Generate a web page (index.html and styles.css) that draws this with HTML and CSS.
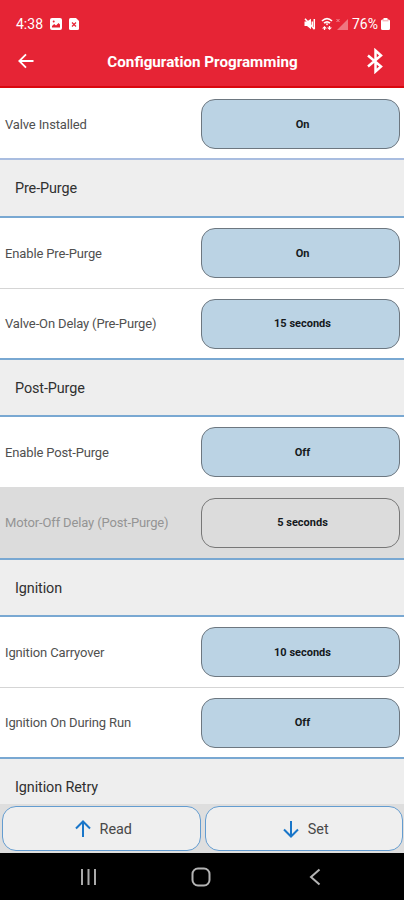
FILE: index.html
```
<!DOCTYPE html>
<html lang="en">
<head>
<meta charset="utf-8">
<title>Configuration Programming</title>
<link rel="stylesheet" href="styles.css">
</head>
<body>
<div class="screen">
  <header class="header">
    <div class="status">
      <span class="clock">4:38</span>
      <svg class="ic-photo" width="12" height="12" viewBox="0 0 12 12"><rect width="12" height="12" rx="2" fill="#fff"/><path d="M2 9.500V8l2.200-2 1.800 1.500L8.500 5 10 6.500V9.500Z" fill="#e62435"/><circle cx="3.700" cy="3.500" r="1" fill="#e62435"/></svg>
      <svg class="ic-sim" width="10" height="12" viewBox="0 0 10 12"><path d="M1.500 0H7L10 3V10.500Q10 12 8.500 12H1.500Q0 12 0 10.500V1.500Q0 0 1.500 0Z" fill="#fff"/><path d="M3 4.500 7 8.500M7 4.500 3 8.500" stroke="#e62435" stroke-width="1.200"/></svg>
      <span class="spacer"></span>
      <svg class="ic-mute" width="12" height="12" viewBox="0 0 12 12"><path d="M.5 3.500H3L7 .8V11.200L3 8H.5Z" fill="#fff"/><path d="M1 .8 10.500 11.200" stroke="#fff" stroke-width="1.600"/><path d="M8.300 3.500V8M10.300 1V11" stroke="#fff" stroke-width="1.500"/></svg>
      <svg class="ic-wifi" width="12" height="14" viewBox="0 0 12 14"><path d="M1 4Q6-.8 11 4M3 6.200Q6 3.500 9 6.200" fill="none" stroke="#fff" stroke-width="1.700"/><path d="M4.500 6.500 6 8.500 7.500 6.500ZM1 11.500 3.500 9 6 11.500ZM6 10.500H11L8.500 13Z" fill="#fff"/><path d="M3.500 11V13M8.500 9V11" stroke="#fff" stroke-width="1.300"/></svg>
      <svg class="ic-signal" width="12" height="12" viewBox="0 0 12 12"><path d="M12 1V12H1Z" fill="#fff" opacity=".38"/><path d="M.5 1 3.500 4M3.500 1 .5 4" stroke="#fff" opacity=".5"/></svg>
      <span class="percent">76%</span>
      <svg class="ic-battery" width="9" height="12" viewBox="0 0 9 12"><path d="M2.500 0H6.500V1.500H7.500Q9 1.500 9 3V10.500Q9 12 7.500 12H1.500Q0 12 0 10.500V3Q0 1.500 1.500 1.500H2.500Z" fill="#fff"/><path d="M1.500 2.800H7.500" stroke="#f29aa2"/></svg>
    </div>
    <div class="toolbar">
      <svg class="back" width="16" height="16" viewBox="0 0 16 16"><path d="M15.500 8H1.500M8 1.300 1.300 8 8 14.700" fill="none" stroke="#fff" stroke-width="1.800"/></svg>
      <h1 class="title">Configuration Programming</h1>
      <svg class="bluetooth" width="18" height="26" viewBox="0 0 18 26"><path d="M2 7.500 15 18.500 9.500 23.500V2.500L15 7.500 2 18.500" fill="none" stroke="#fff" stroke-width="2.500"/></svg>
    </div>
  </header>
  <main class="settings">
    <div class="row first"><span class="label">Valve Installed</span><button class="value">On</button></div>
    <h2 class="section tall">Pre-Purge</h2>
    <div class="row"><span class="label">Enable Pre-Purge</span><button class="value">On</button></div>
    <div class="row divided"><span class="label">Valve-On Delay (Pre-Purge)</span><button class="value">15 seconds</button></div>
    <h2 class="section">Post-Purge</h2>
    <div class="row"><span class="label">Enable Post-Purge</span><button class="value">Off</button></div>
    <div class="row disabled"><span class="label">Motor-Off Delay (Post-Purge)</span><button class="value">5 seconds</button></div>
    <h2 class="section">Ignition</h2>
    <div class="row"><span class="label">Ignition Carryover</span><button class="value">10 seconds</button></div>
    <div class="row divided"><span class="label">Ignition On During Run</span><button class="value">Off</button></div>
    <h2 class="section last">Ignition Retry</h2>
  </main>
  <div class="actions">
    <button class="action"><svg width="16" height="18" viewBox="0 0 16 18"><path d="M8 17V2M1 8.500 8 1.500 15 8.500" fill="none" stroke="#1976c9" stroke-width="2"/></svg><span>Read</span></button>
    <button class="action"><svg width="16" height="18" viewBox="0 0 16 18"><path d="M8 1V16M1 9.500 8 16.500 15 9.500" fill="none" stroke="#1976c9" stroke-width="2"/></svg><span>Set</span></button>
  </div>
  <nav class="nav">
    <svg width="18" height="18" viewBox="0 0 18 18"><path d="M2 1V17M8.500 1V17M15 1V17" stroke="#aaa" stroke-width="2"/></svg>
    <svg class="home" width="20" height="20" viewBox="0 0 20 20"><rect x="1.500" y="1.500" width="17" height="17" rx="5.500" fill="none" stroke="#b4b4b4" stroke-width="2"/></svg>
    <svg width="12" height="18" viewBox="0 0 12 18"><path d="M10.500 1.500 2 9 10.500 16.500" fill="none" stroke="#b4b4b4" stroke-width="2"/></svg>
  </nav>
</div>
</body>
</html>
```
FILE: styles.css
```
* { box-sizing: border-box; }
body { margin: 0; font-family: Roboto, sans-serif; }
button { font-family: inherit; margin: 0; padding: 0; }
svg { flex: none; display: block; }

.screen { width: 404px; height: 900px; display: flex; flex-direction: column; overflow: hidden; background: #fff; }

.header { height: 88px; flex: none; background: #e62435; border-bottom: 2px solid #d9080f; color: #fff; }
.status { display: flex; align-items: center; height: 38px; padding: 9px 14px 0 16px; }
.clock { font-size: 14px; width: 28px; white-space: nowrap; }
.ic-photo { margin-left: 6px; }
.ic-sim { margin-left: 7px; }
.spacer { flex: 1; }
.ic-wifi { margin-left: 5px; }
.ic-signal { margin-left: 3px; }
.percent { font-size: 14px; margin-left: 4px; width: 27px; white-space: nowrap; }
.ic-battery { margin-left: 2px; }
.toolbar { display: flex; align-items: center; height: 46px; padding: 0 20px 0 18px; }
.title { margin: 0; flex: 1; padding: 1px 0 0 5px; text-align: center; font-size: 15.2px; line-height: 20px; font-weight: 700; white-space: nowrap; }

.settings { flex: none; height: 716px; overflow: hidden; }
.row { height: 70px; display: flex; align-items: center; justify-content: space-between; padding: 0 4px 0 5px; }
.first { padding-top: 2px; }
.divided { border-top: 1px solid #d5d5d5; }
.disabled { height: 71px; background: #dcdcdc; }
.label { font-size: 13px; letter-spacing: -0.14px; color: #505050; white-space: nowrap; }
.disabled .label { color: #949494; }
.value { width: 199px; height: 50px; padding-left: 4px; border: 1px solid #6d7780; border-radius: 14px; background: #bbd3e4; color: #15191c; font-size: 11px; font-weight: 700; }
.disabled .value { background: #dcdcdc; border-color: #777; }
.section { margin: 0; height: 59px; display: flex; align-items: center; padding: 1px 15px 0; background: #eee; border: solid #79a8d2; border-width: 2px 0; font-size: 14.4px; letter-spacing: -0.1px; font-weight: 400; color: #303030; }
.tall { height: 60px; border-top-color: #a9bde0; }

.actions { flex: none; height: 49px; display: grid; grid-template-columns: 1fr 1fr; gap: 4px; padding: 2px 1px 2px 2px; background: #dedede; }
.action { display: flex; align-items: center; justify-content: center; gap: 9px; height: 45px; padding: 1px 0 0 4px; border: 1px solid #639cd0; border-radius: 14px; background: #efefef; color: #484848; font-size: 14.4px; }

.nav { flex: none; height: 47px; display: flex; align-items: center; background: #000; padding: 0 83px 0 80px; justify-content: space-between; }
.home { margin-right: 5px; }
```
